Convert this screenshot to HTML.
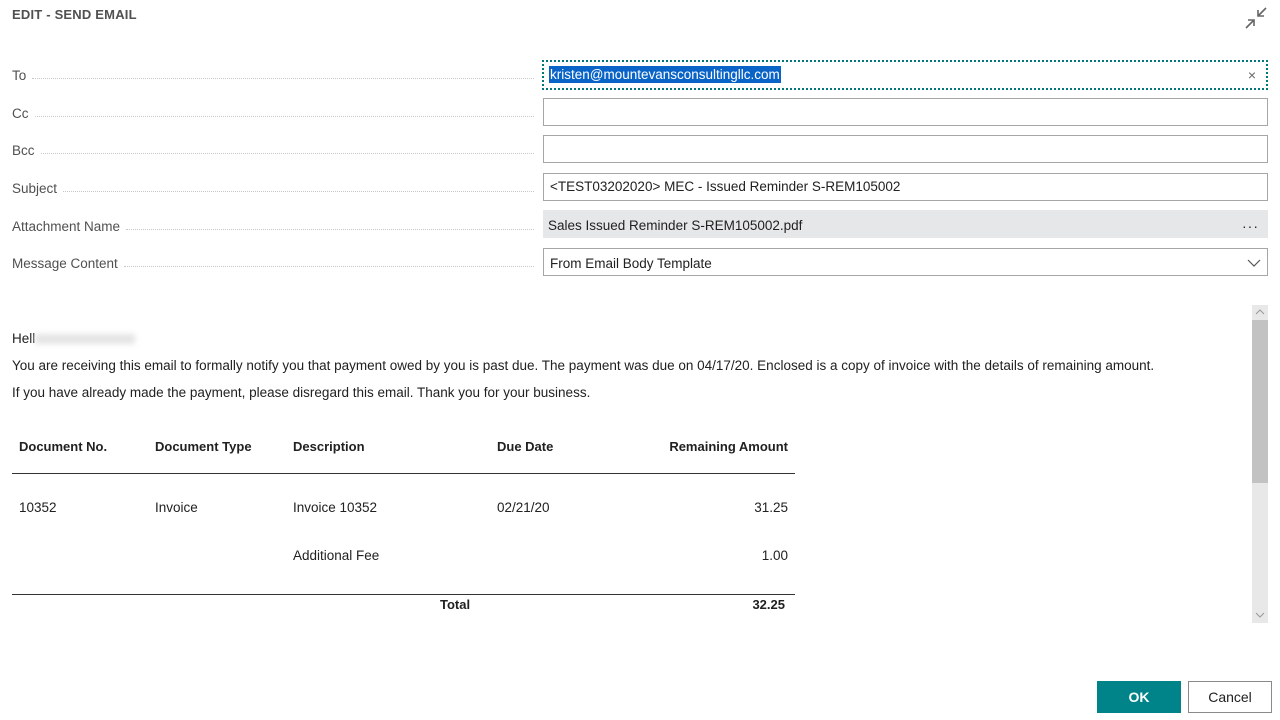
<!DOCTYPE html>
<html><head><meta charset="utf-8"><style>
body{margin:0;width:1280px;height:720px;background:#fff;font-family:"Liberation Sans",sans-serif;position:relative;overflow:hidden;color:#212121}
.abs{position:absolute}
.title{left:12px;top:7px;font-size:13px;color:#505050;letter-spacing:0.2px;font-weight:bold}
.lbl{left:12px;font-size:13.5px;color:#505050;width:522px;display:flex;align-items:center;height:20px}
.lbl span{white-space:nowrap;margin-right:6px}
.lbl i{flex:1;border-bottom:1px dotted #c8c8c8;height:0;margin-top:6px}
.inp{left:543px;height:26px;border:1px solid #a6a6a6;font-size:13.5px;line-height:26px;padding-left:6px;box-sizing:content-box;width:717px}
.txt{font-size:13.5px;color:#212121}
</style></head><body>
<div class="abs title">EDIT - SEND EMAIL</div>
<svg class="abs" style="left:1244px;top:6px" width="24" height="24" viewBox="0 0 24 24"><path d="M2 22 L10 14 M4 14 H10 V20 M22 2 L14 10 M14 4 V10 H20" stroke="#666" stroke-width="1.6" fill="none"/></svg>

<div class="abs lbl" style="top:65px"><span>To</span><i></i></div>
<div class="abs lbl" style="top:103px"><span>Cc</span><i></i></div>
<div class="abs lbl" style="top:140px"><span>Bcc</span><i></i></div>
<div class="abs lbl" style="top:178px"><span>Subject</span><i></i></div>
<div class="abs lbl" style="top:216px"><span>Attachment Name</span><i></i></div>
<div class="abs lbl" style="top:253px"><span>Message Content</span><i></i></div>

<div class="abs inp" style="top:60px;border:2px dotted #00777a;height:26px;left:542px;padding-left:5px;width:717px"><span style="background:#0a64c8;color:#fff;padding:1px 1px">kristen@mountevansconsultingllc.com</span><span style="position:absolute;right:10px;top:0;color:#666;font-size:14px">×</span></div>
<div class="abs inp" style="top:98px"></div>
<div class="abs inp" style="top:135px"></div>
<div class="abs inp" style="top:173px">&lt;TEST03202020&gt; MEC - Issued Reminder S-REM105002</div>
<div class="abs inp" style="top:210px;border-color:#e6e7e8;background:#e6e7e8;padding-left:4px;width:719px;line-height:30px">Sales Issued Reminder S-REM105002.pdf<span style="position:absolute;right:8px;top:0px;font-size:14px;letter-spacing:1px;line-height:30px">···</span></div>
<div class="abs inp" style="top:248px;line-height:30px">From Email Body Template<svg style="position:absolute;right:6px;top:9px" width="14" height="10"><path d="M1 2 L7 8 L13 2" stroke="#555" fill="none" stroke-width="1.2"/></svg></div>

<div class="abs txt" style="left:12px;top:331px">Hell<span style="display:inline-block;width:100px;height:10px;background:#e4e4e4;filter:blur(3px);vertical-align:middle"></span></div>
<div class="abs txt" style="left:12px;top:358px">You are receiving this email to formally notify you that payment owed by you is past due. The payment was due on 04/17/20. Enclosed is a copy of invoice with the details of remaining amount.</div>
<div class="abs txt" style="left:12px;top:385px">If you have already made the payment, please disregard this email. Thank you for your business.</div>

<div class="abs txt" style="left:19px;top:439px;font-weight:bold;font-size:13px">Document No.</div>
<div class="abs txt" style="left:155px;top:439px;font-weight:bold;font-size:13px">Document Type</div>
<div class="abs txt" style="left:293px;top:439px;font-weight:bold;font-size:13px">Description</div>
<div class="abs txt" style="left:497px;top:439px;font-weight:bold;font-size:13px">Due Date</div>
<div class="abs txt" style="right:492px;top:439px;font-weight:bold;font-size:13px">Remaining Amount</div>
<div class="abs" style="left:12px;top:473px;width:783px;height:1px;background:#333"></div>
<div class="abs txt" style="left:19px;top:500px">10352</div>
<div class="abs txt" style="left:155px;top:500px">Invoice</div>
<div class="abs txt" style="left:293px;top:500px">Invoice 10352</div>
<div class="abs txt" style="left:497px;top:500px">02/21/20</div>
<div class="abs txt" style="right:492px;top:500px">31.25</div>
<div class="abs txt" style="left:293px;top:548px">Additional Fee</div>
<div class="abs txt" style="right:492px;top:548px">1.00</div>
<div class="abs" style="left:12px;top:594px;width:783px;height:1px;background:#333"></div>
<div class="abs txt" style="left:440px;top:597px;font-weight:bold;font-size:13px">Total</div>
<div class="abs txt" style="right:495px;top:597px;font-weight:bold;font-size:13px">32.25</div>

<div class="abs" style="left:1252px;top:305px;width:16px;height:318px;background:#e8e8e8"></div>
<div class="abs" style="left:1252px;top:320px;width:16px;height:163px;background:#c2c2c2"></div>
<svg class="abs" style="left:1255px;top:308px" width="10" height="8"><path d="M1 6 L5 2 L9 6" stroke="#999" fill="none"/></svg>
<svg class="abs" style="left:1255px;top:611px" width="10" height="8"><path d="M1 2 L5 6 L9 2" stroke="#999" fill="none"/></svg>

<div class="abs" style="left:1097px;top:681px;width:84px;height:32px;background:#008489;color:#fff;font-size:14px;font-weight:bold;text-align:center;line-height:32px">OK</div>
<div class="abs" style="left:1188px;top:681px;width:82px;height:30px;border:1px solid #8a8a8a;color:#212121;font-size:14px;text-align:center;line-height:30px">Cancel</div>
</body></html>
